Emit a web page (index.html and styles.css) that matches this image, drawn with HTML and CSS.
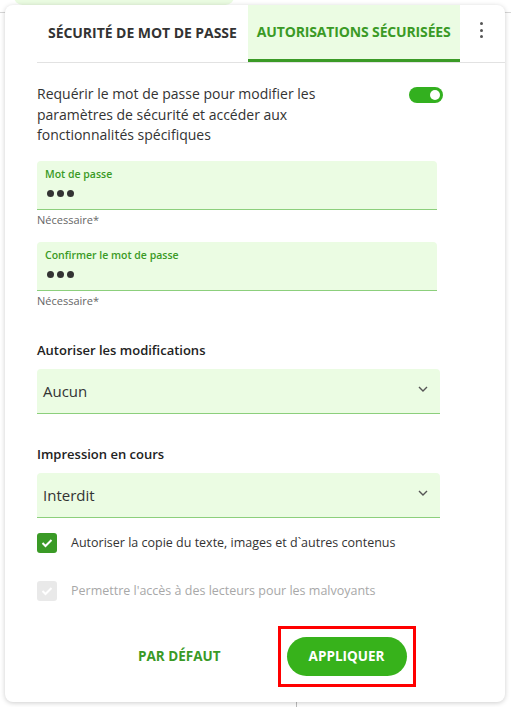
FILE: index.html
```html
<!DOCTYPE html>
<html>

<head>
    <title>Autorisations sécurisées</title>
    <meta charset="utf-8">
    <meta name="viewport" content="width=device-width, initial-scale=1.0">
    <link rel="stylesheet" href="styles.css">
</head>

<body>
    <div id="page">
        <div id="page-header">
            <div id="page-pill"></div>
        </div>
        <div id="page-rule"></div>
    </div>

    <div id="dialog">
        <div id="tabs">
            <div class="tab">SÉCURITÉ DE MOT DE PASSE</div>
            <div class="tab active">AUTORISATIONS SÉCURISÉES</div>
            <div id="kebab"><span></span><span></span><span></span></div>
        </div>

        <div id="content">
            <div class="require-row">
                <p class="require-text">Requérir le mot de passe pour modifier les paramètres de sécurité et accéder aux fonctionnalités spécifiques</p>
                <div class="toggle"><span class="knob"></span></div>
            </div>

            <div class="field">
                <label class="field-label">Mot de passe</label>
                <div class="dots"><span></span><span></span><span></span></div>
            </div>
            <p class="helper">Nécessaire*</p>

            <div class="field">
                <label class="field-label">Confirmer le mot de passe</label>
                <div class="dots"><span></span><span></span><span></span></div>
            </div>
            <p class="helper">Nécessaire*</p>

            <p class="section-title">Autoriser les modifications</p>
            <div class="select">
                <span>Aucun</span>
                <svg width="10" height="6" viewBox="0 0 10 6"><path d="M1 1l4 4 4-4" fill="none" stroke="#555" stroke-width="1.4"/></svg>
            </div>

            <p class="section-title">Impression en cours</p>
            <div class="select">
                <span>Interdit</span>
                <svg width="10" height="6" viewBox="0 0 10 6"><path d="M1 1l4 4 4-4" fill="none" stroke="#555" stroke-width="1.4"/></svg>
            </div>

            <div class="check-row">
                <div class="checkbox on">
                    <svg width="12" height="10" viewBox="0 0 12 10"><path d="M1.5 5l3 3 6-6" fill="none" stroke="#fff" stroke-width="2"/></svg>
                </div>
                <span>Autoriser la copie du texte, images et d`autres contenus</span>
            </div>
            <div class="check-row disabled">
                <div class="checkbox">
                    <svg width="12" height="10" viewBox="0 0 12 10"><path d="M1.5 5l3 3 6-6" fill="none" stroke="#fff" stroke-width="2"/></svg>
                </div>
                <span>Permettre l'accès à des lecteurs pour les malvoyants</span>
            </div>

            <div id="actions">
                <button class="btn-text">PAR DÉFAUT</button>
                <div class="highlight">
                    <button class="btn-apply">APPLIQUER</button>
                </div>
            </div>
        </div>
    </div>
</body>

</html>
```

FILE: styles.css
```css
* {
    box-sizing: border-box;
}

body {
    margin: 0;
    background-color: #ffffff;
    font-family: 'Open Sans', 'Noto Sans', sans-serif;
    color: #333333;
    overflow: hidden;
}

#page {
    height: 707px;
}

#page-header {
    height: 13px;
    border-bottom: 1px solid #d6d6d6;
    position: relative;
}

#page-pill {
    position: absolute;
    left: 14px;
    top: -12px;
    width: 220px;
    height: 17px;
    border-radius: 10px;
    background-color: #eafbe1;
}

#page-rule {
    margin-left: 296px;
    margin-top: 680px;
    width: 1px;
    height: 20px;
    background-color: #bbbbbb;
}

#dialog {
    position: absolute;
    top: 5px;
    left: 5px;
    width: 500px;
    height: 697px;
    background-color: #ffffff;
    border-radius: 8px;
    box-shadow: 0 1px 5px #00000033;
    padding-left: 32px;
}

#tabs {
    display: flex;
    height: 58px;
    border-bottom: 1px solid #e2e2e2;
}

.tab {
    display: flex;
    align-items: center;
    padding: 0 11px 2px 11px;
    font-size: 14px;
    font-weight: 700;
    color: #333333;
    letter-spacing: -0.05px;
}

.tab.active {
    padding: 0 9px 2px 9px;
    background-color: #ebfce3;
    color: #3a9a26;
    border-bottom: 3px solid #3a9a26;
    letter-spacing: -0.15px;
}

#kebab {
    display: flex;
    flex-direction: column;
    gap: 3.5px;
    margin-left: 20px;
    margin-top: 17px;
}

#kebab span {
    width: 3px;
    height: 3px;
    border-radius: 50%;
    background-color: #555555;
}

#content {
    width: 406px;
}

.require-row {
    display: flex;
    justify-content: space-between;
    align-items: flex-start;
    margin-top: 21px;
}

.require-text {
    margin: 0;
    width: 300px;
    font-size: 14px;
    line-height: 20.5px;
    color: #333333;
}

.toggle {
    width: 34px;
    height: 16px;
    margin-top: 3px;
    border-radius: 8px;
    background-color: #33b01f;
    display: flex;
    justify-content: flex-end;
    align-items: center;
    padding-right: 3px;
}

.knob {
    width: 10px;
    height: 10px;
    border-radius: 50%;
    background-color: #ffffff;
}

.field {
    width: 400px;
    height: 49px;
    margin-top: 15px;
    background-color: #ebfce3;
    border-radius: 4px 4px 0 0;
    border-bottom: 1px solid #8ccf7c;
    padding: 6px 8px 0 8px;
}

.helper + .field {
    margin-top: 15px;
}

.field-label {
    display: block;
    font-size: 10.5px;
    font-weight: 600;
    color: #3a9a26;
}

.dots {
    display: flex;
    gap: 3px;
    margin-top: 9px;
    padding-left: 2px;
}

.dots span {
    width: 7px;
    height: 7px;
    border-radius: 50%;
    background-color: #333333;
}

.helper {
    margin: 2px 0 0 0;
    font-size: 11px;
    color: #666666;
}

.section-title {
    margin: 33px 0 0 0;
    font-size: 13px;
    font-weight: 600;
    color: #222222;
}

.select + .section-title {
    margin-top: 31px;
}

.section-title + .select {
    margin-top: 10px;
}

.select {
    display: flex;
    justify-content: space-between;
    align-items: center;
    width: 403px;
    height: 45px;
    padding: 0 12px 0 6px;
    background-color: #ebfce3;
    border-radius: 4px 4px 0 0;
    border-bottom: 1px solid #8ccf7c;
    font-size: 15px;
    color: #333333;
}

.select svg {
    margin-top: -4px;
}

.check-row {
    display: flex;
    align-items: center;
    gap: 14px;
    margin-top: 15px;
    font-size: 12.5px;
    color: #333333;
}

.check-row + .check-row {
    margin-top: 28px;
}

.checkbox {
    width: 20px;
    height: 20px;
    border-radius: 3px;
    background-color: #e9e9e9;
    display: flex;
    align-items: center;
    justify-content: center;
}

.checkbox.on {
    background-color: #3a9a26;
}

.check-row.disabled {
    color: #a8a8a8;
}

#actions {
    display: flex;
    align-items: center;
    margin-top: 25px;
    padding-left: 101px;
    gap: 57px;
}

button {
    font-family: inherit;
    border: none;
    cursor: pointer;
}

.btn-text {
    background: none;
    padding: 0;
    font-size: 13.5px;
    font-weight: 700;
    color: #3a9a26;
}

.highlight {
    border: 3px solid #ff0000;
    padding: 8px 6px;
}

.btn-apply {
    width: 120px;
    height: 39px;
    border-radius: 20px;
    background-color: #37b21b;
    color: #ffffff;
    font-size: 13.5px;
    font-weight: 700;
}
```
